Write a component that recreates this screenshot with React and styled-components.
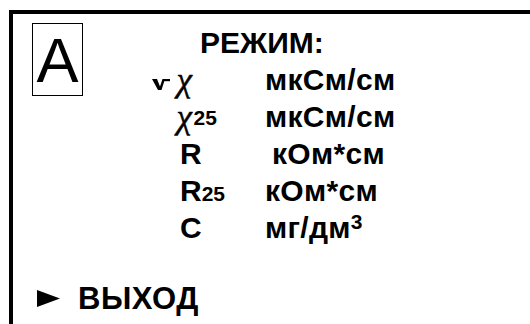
import React from 'react';
import styled, { createGlobalStyle } from 'styled-components';

const GlobalStyle = createGlobalStyle`
  html, body {
    margin: 0;
    padding: 0;
    background: #fff;
    overflow: hidden;
  }
  body {
    font-family: "Liberation Sans", Arial, sans-serif;
    color: #000;
  }
`;

const Frame = styled.div`
  margin: 10px 0 0 9px;
  width: 600px;
  height: 400px;
  border: 4px solid #000;
  padding: 9px 0 0 19px;
  display: flex;
  flex-direction: column;
`;

const Top = styled.div`
  display: flex;
  align-items: flex-start;
  gap: 67px;
`;

const ModeBox = styled.div`
  width: 51px;
  height: 73px;
  box-sizing: border-box;
  border: 1.5px solid #000;
  display: flex;
  align-items: center;
  justify-content: center;
  font-size: 63px;
  line-height: 1;
  padding-top: 2px;
`;

const Menu = styled.div`
  display: grid;
  grid-template-columns: 115px auto;
  grid-auto-rows: 37px;
  margin-top: 1px;
  font-size: 30px;
  font-weight: bold;
  line-height: 37px;
  white-space: nowrap;
`;

const Title = styled.div`
  grid-column: 1 / 3;
  padding-left: 50px;
`;

const Label = styled.div`
  padding-left: ${(p) => p.$indent}px;
`;

const Check = styled.svg`
  display: inline-block;
  width: 19px;
  height: 11px;
  margin-right: 6px;
  vertical-align: 1px;
`;

const Chi = styled.span`
  display: inline-block;
  font-family: "Liberation Serif", "Times New Roman", serif;
  font-weight: normal;
  font-size: 35px;
  -webkit-text-stroke: 0.5px #000;
  transform: skewX(-8deg);
  margin-right: 1px;
`;

const Index = styled.span`
  font-size: 21px;
  position: relative;
  top: ${(p) => p.$raised || 0}px;
`;

const Unit = styled.div`
  padding-left: ${(p) => p.$indent || 0}px;
  letter-spacing: 0.3px;
`;

const Exit = styled.div`
  margin: 34px 0 0 5px;
  height: 37px;
  display: flex;
  align-items: center;
  gap: 18px;
  font-size: 31px;
  font-weight: bold;
  line-height: 37px;
  letter-spacing: 0.5px;
`;

const CheckMark = () => (
  <Check viewBox="0 0 19 11">
    <path d="M0 0 H5 L8 7.5 L10.5 0 H13 L9.5 11 H6 Z" fill="#000" />
    <rect x="12" y="0" width="6" height="2.2" fill="#000" />
  </Check>
);

const rows = [
  { check: true, label: <Chi>χ</Chi>, unit: 'мкСм/см', pad: 2 },
  { label: <><Chi>χ</Chi><Index $raised={-3}>25</Index></>, unit: 'мкСм/см', pad: 27 },
  { label: 'R', unit: 'кОм*см', pad: 30, indent: 7 },
  { label: <>R<Index>25</Index></>, unit: 'кОм*см', pad: 30 },
  { label: 'C', unit: <>мг/дм<Index $raised={-9}>3</Index></>, pad: 30 },
];

export default function App() {
  return (
    <>
      <GlobalStyle />
      <Frame>
        <Top>
          <ModeBox>A</ModeBox>
          <Menu>
            <Title>РЕЖИМ:</Title>
            {rows.map((r, i) => (
              <React.Fragment key={i}>
                <Label $indent={r.pad}>
                  {r.check && <CheckMark />}
                  {r.label}
                </Label>
                <Unit $indent={r.indent}>{r.unit}</Unit>
              </React.Fragment>
            ))}
          </Menu>
        </Top>
        <Exit>
          <svg width="23" height="17" viewBox="0 0 23 17">
            <path d="M0 0 L23 8.5 L0 17 Z" fill="#000" />
          </svg>
          ВЫХОД
        </Exit>
      </Frame>
    </>
  );
}
